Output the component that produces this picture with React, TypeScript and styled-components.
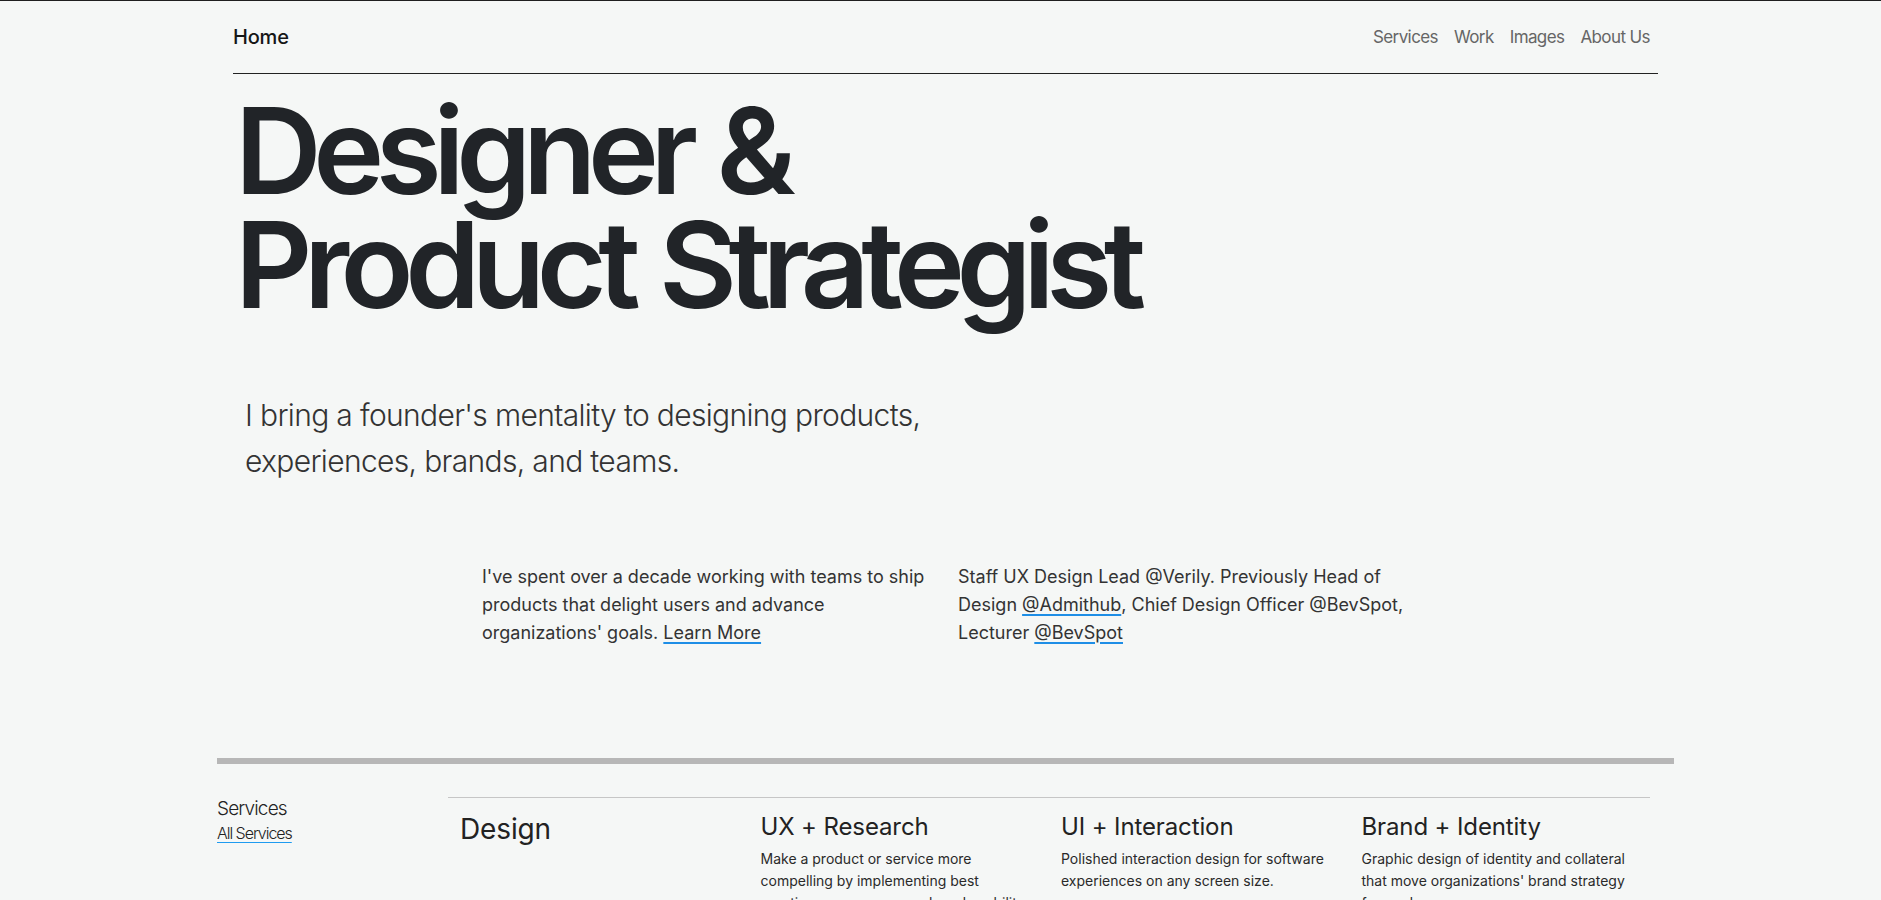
import React from "react";
import styled, { createGlobalStyle } from "styled-components";

const GlobalStyle = createGlobalStyle`
  html, body { margin: 0; padding: 0; }
  body {
    background: #f5f7f6;
    border-top: 1px solid #1f1f1f;
    font-family: Inter, "Noto Sans", sans-serif;
    color: #212529;
  }
  * { box-sizing: border-box; }
`;

const Page = styled.div`
  width: 1871px;
  margin-left: 10px;
`;

const Header = styled.header`
  width: 1425px;
  margin: 0 auto;
  height: 73px;
  display: flex;
  align-items: center;
  justify-content: space-between;
  border-bottom: 1px solid #222;
`;

const HomeLink = styled.a`
  font-size: 20px;
  font-weight: 500;
  color: #161616;
  text-decoration: none;
  letter-spacing: -0.01em;
`;

const Nav = styled.nav`
  display: flex;
`;

const NavLink = styled.a`
  font-size: 17px;
  color: #666;
  text-decoration: none;
  padding: 0 8px;
  letter-spacing: -0.035em;
`;

const Hero = styled.section`
  width: 1425px;
  margin: 0 auto;
`;

const Headline = styled.h1`
  margin: 20px 0 0;
  padding-left: 2px;
  font-size: 120px;
  font-weight: 600;
  line-height: 114px;
  letter-spacing: -0.07em;
  word-spacing: 0.04em;
  color: #212428;
`;

const Lead = styled.p`
  margin: 70px 0 0;
  padding-left: 12px;
  max-width: 740px;
  font-size: 30px;
  font-weight: 300;
  line-height: 46px;
  letter-spacing: -0.022em;
  color: #333;
`;

const About = styled.section`
  margin: 79px 0 0 472px;
  display: grid;
  grid-template-columns: 448px 460px;
  column-gap: 28px;
`;

const AboutText = styled.p`
  margin: 0;
  font-size: 18px;
  line-height: 28px;
  color: #333;
`;

const UnderLink = styled.a`
  color: inherit;
  text-decoration: underline;
  text-decoration-color: #1e8ee6;
  text-decoration-thickness: 2px;
  text-underline-offset: 3px;
`;

const Divider = styled.hr`
  width: 1457px;
  height: 6px;
  margin: 111px auto 0;
  border: 0;
  background: #b7b7b7;
`;

const ServicesSection = styled.section`
  width: 1457px;
  margin: 33px auto 0;
  display: grid;
  grid-template-columns: 231px 1202px;
`;

const SectionLabel = styled.div`
  display: flex;
  flex-direction: column;
`;

const LabelTitle = styled.span`
  font-size: 19px;
  font-weight: 300;
  line-height: 24px;
  letter-spacing: -0.045em;
  color: #222;
`;

const LabelLink = styled.a`
  align-self: flex-start;
  font-size: 16px;
  font-weight: 300;
  line-height: 24px;
  letter-spacing: -0.065em;
  color: #222;
  text-decoration: underline;
  text-decoration-color: #1e9bf0;
  text-underline-offset: 3px;
`;

const ServiceGrid = styled.div`
  border-top: 1px solid #c6c6c6;
  display: grid;
  grid-template-columns: repeat(4, 1fr);
`;

const ServiceCol = styled.div`
  padding: 15px 12px 0;
`;

const ServiceTitle = styled.h2<{ $big?: boolean }>`
  margin: 0;
  font-size: ${(p) => (p.$big ? "28px" : "24px")};
  font-weight: 400;
  line-height: 1.2;
  color: #222;
  letter-spacing: -0.005em;
`;

const ServiceText = styled.p`
  margin: 6px 0 0;
  font-size: 14px;
  line-height: 22px;
  color: #2a2a2a;
`;

const services = [
  { title: "Design", big: true, text: "" },
  {
    title: "UX + Research",
    text: "Make a product or service more compelling by implementing best practices on user research and usability.",
  },
  {
    title: "UI + Interaction",
    text: "Polished interaction design for software experiences on any screen size.",
  },
  {
    title: "Brand + Identity",
    text: "Graphic design of identity and collateral that move organizations' brand strategy forward.",
  },
];

export default function App() {
  return (
    <>
      <GlobalStyle />
      <Page>
        <Header>
          <HomeLink href="#">Home</HomeLink>
          <Nav>
            <NavLink href="#">Services</NavLink>
            <NavLink href="#">Work</NavLink>
            <NavLink href="#">Images</NavLink>
            <NavLink href="#">About Us</NavLink>
          </Nav>
        </Header>
        <Hero>
          <Headline>
            Designer &amp;
            <br />
            Product Strategist
          </Headline>
          <Lead>
            I bring a founder's mentality to designing products, experiences,
            brands, and teams.
          </Lead>
        </Hero>
        <About>
          <AboutText>
            I've spent over a decade working with teams to ship products that
            delight users and advance organizations' goals.{" "}
            <UnderLink href="#">Learn More</UnderLink>
          </AboutText>
          <AboutText>
            Staff UX Design Lead @Verily. Previously Head of Design{" "}
            <UnderLink href="#">@Admithub</UnderLink>, Chief Design Officer
            @BevSpot, Lecturer <UnderLink href="#">@BevSpot</UnderLink>
          </AboutText>
        </About>
        <Divider />
        <ServicesSection>
          <SectionLabel>
            <LabelTitle>Services</LabelTitle>
            <LabelLink href="#">All Services</LabelLink>
          </SectionLabel>
          <ServiceGrid>
            {services.map((s) => (
              <ServiceCol key={s.title}>
                <ServiceTitle $big={s.big}>{s.title}</ServiceTitle>
                {s.text && <ServiceText>{s.text}</ServiceText>}
              </ServiceCol>
            ))}
          </ServiceGrid>
        </ServicesSection>
      </Page>
    </>
  );
}
